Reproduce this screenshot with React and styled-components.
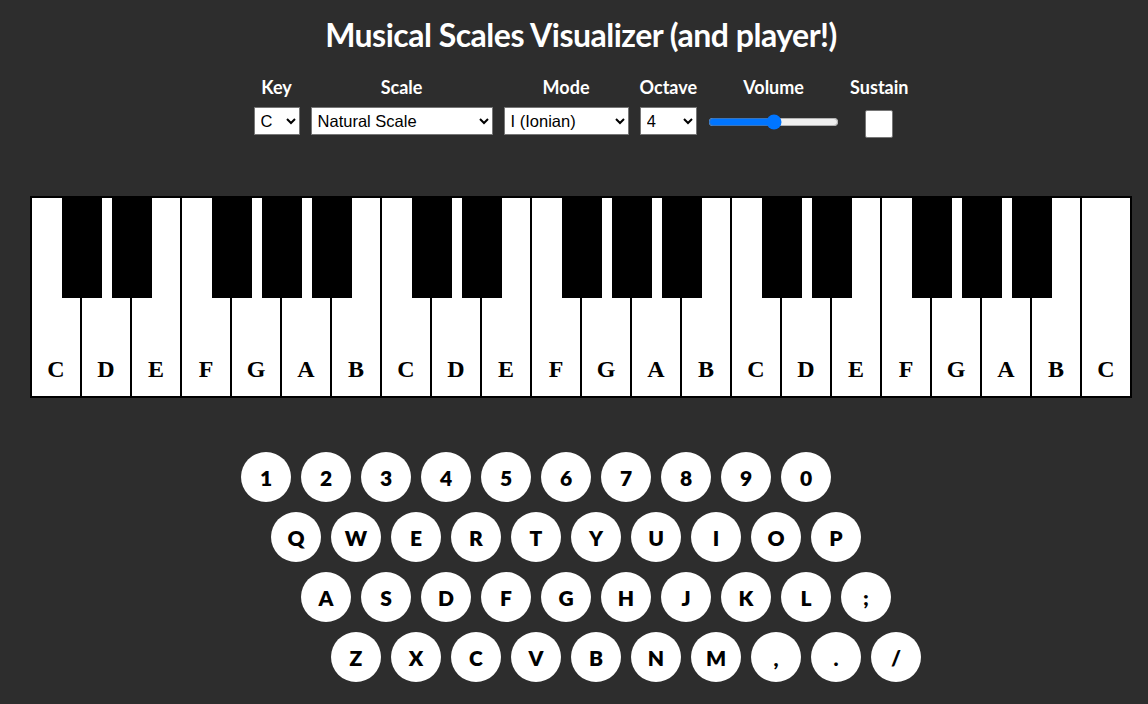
import React from "react";
import styled, { createGlobalStyle } from "styled-components";

const GlobalStyle = createGlobalStyle`
  html, body {
    margin: 0;
    background: #2d2d2d;
  }
  body {
    font-family: Lato, "Noto Sans", sans-serif;
    color: #fff;
  }
`;

const whiteNotes = ["C", "D", "E", "F", "G", "A", "B"];
const hasSharp = { C: true, D: true, F: true, G: true, A: true };

const pianoKeys = [];
for (let o = 0; o < 3; o++) {
  whiteNotes.forEach((n) => pianoKeys.push({ note: n, sharp: hasSharp[n] }));
}
pianoKeys.push({ note: "C", sharp: false });

const rows = [
  ["1", "2", "3", "4", "5", "6", "7", "8", "9", "0"],
  ["Q", "W", "E", "R", "T", "Y", "U", "I", "O", "P"],
  ["A", "S", "D", "F", "G", "H", "J", "K", "L", ";"],
  ["Z", "X", "C", "V", "B", "N", "M", ",", ".", "/"],
];

const App = () => {
  return (
    <Page>
      <GlobalStyle />
      <Title>Musical Scales Visualizer (and player!)</Title>

      <Controls>
        <Field>
          <Label>Key</Label>
          <Select $w={46} defaultValue="C">
            <option>C</option>
          </Select>
        </Field>
        <Field>
          <Label>Scale</Label>
          <Select $w={182} defaultValue="Natural Scale">
            <option>Natural Scale</option>
          </Select>
        </Field>
        <Field>
          <Label>Mode</Label>
          <Select $w={125} defaultValue="I (Ionian)">
            <option>I (Ionian)</option>
          </Select>
        </Field>
        <Field>
          <Label>Octave</Label>
          <Select $w={57} defaultValue="4">
            <option>4</option>
          </Select>
        </Field>
        <Field>
          <Label>Volume</Label>
          <Range type="range" min="0" max="100" defaultValue="50" />
        </Field>
        <Field>
          <Label>Sustain</Label>
          <Check type="checkbox" />
        </Field>
      </Controls>

      <Piano>
        {pianoKeys.map((k, i) => (
          <WhiteKey key={i}>
            {k.note}
            {k.sharp && <BlackKey />}
          </WhiteKey>
        ))}
      </Piano>

      <Keyboard>
        {rows.map((row, r) => (
          <KeyRow key={r} $indent={r * 30}>
            {row.map((c) => (
              <RoundKey key={c}>{c}</RoundKey>
            ))}
          </KeyRow>
        ))}
      </Keyboard>
    </Page>
  );
};

const Page = styled.div`
  display: flex;
  flex-direction: column;
  align-items: center;
  padding: 0 0 0 14px;
  min-height: 704px;
  box-sizing: border-box;
`;

const Title = styled.h1`
  margin: 15px 0 0;
  font-size: 32px;
  font-weight: 700;
  letter-spacing: -0.5px;
  line-height: 40px;
`;

const Controls = styled.div`
  display: flex;
  gap: 11px;
  margin-top: 21px;
  align-items: flex-start;
`;

const Field = styled.div`
  display: flex;
  flex-direction: column;
  align-items: center;
`;

const Label = styled.div`
  font-size: 18px;
  font-weight: 700;
  line-height: 22px;
  margin-bottom: 9px;
`;

const Select = styled.select`
  width: ${(p) => p.$w}px;
  height: 28px;
  font-family: Arial, "Liberation Sans", sans-serif;
  font-size: 16.5px;
  background: #fff;
  color: #000;
  border: 1px solid #767676;
  border-radius: 0;
  padding: 0 2px;
`;

const Range = styled.input`
  width: 131px;
  margin: 7px 0 0;
  accent-color: #0075ff;
`;

const Check = styled.input`
  appearance: none;
  width: 28px;
  height: 28px;
  margin: 3px 0 0;
  background: #fff;
  border: 1px solid #767676;
  border-radius: 2px;
`;

const Piano = styled.div`
  display: flex;
  margin-top: 58px;
  border: 1px solid #000;
`;

const WhiteKey = styled.div`
  position: relative;
  width: 50px;
  height: 200px;
  box-sizing: border-box;
  border: 1px solid #000;
  background: #fff;
  color: #000;
  display: flex;
  align-items: flex-end;
  justify-content: center;
  padding-bottom: 13px;
  font-family: "Liberation Serif", "Times New Roman", serif;
  font-weight: 700;
  font-size: 24px;
`;

const BlackKey = styled.div`
  position: absolute;
  top: 0;
  left: 30px;
  width: 40px;
  height: 100px;
  background: #000;
  z-index: 1;
`;

const Keyboard = styled.div`
  width: 680px;
  margin-top: 54px;
  display: flex;
  flex-direction: column;
  gap: 10px;
`;

const KeyRow = styled.div`
  display: flex;
  gap: 10px;
  padding-left: ${(p) => p.$indent}px;
`;

const RoundKey = styled.div`
  width: 50px;
  height: 50px;
  border-radius: 50%;
  background: #fff;
  color: #000;
  display: flex;
  align-items: center;
  justify-content: center;
  font-size: 21px;
  font-weight: 800;
`;

export default App;
